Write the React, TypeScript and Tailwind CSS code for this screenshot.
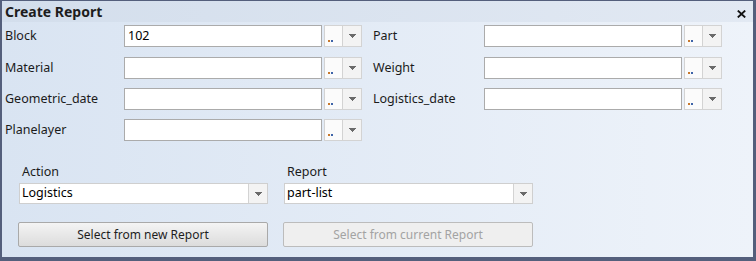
import React from "react";

const font = { fontFamily: '"Noto Sans", "Open Sans", Arial, sans-serif' };

function Arrow() {
  return (
    <svg width="7" height="4" viewBox="0 0 7 4" className="block">
      <rect x="0" y="0" width="7" height="1" fill="#6a6a6a" />
      <rect x="1" y="1" width="5" height="1" fill="#6a6a6a" />
      <rect x="2" y="2" width="3" height="1" fill="#6a6a6a" />
      <rect x="3" y="3" width="1" height="1" fill="#6a6a6a" />
    </svg>
  );
}

function Field({ label, value, labelW }: { label: string; value?: string; labelW: string }) {
  return (
    <div className="flex items-center h-[22px]">
      <div className={`${labelW} text-[12.5px] text-[#1b1b1b] leading-none shrink-0`}>{label}</div>
      <div className="w-[198px] h-[22px] bg-white border border-[#ababab] flex items-center px-[3px] text-[12.5px] text-black">
        {value}
      </div>
      <div className="ml-[2px] w-[19px] h-[22px] bg-[#fbfbfb] border border-[#d3d3d3] relative">
        <span className="absolute left-[3px] top-[14px] w-[2px] h-[2px] bg-[#c8782c]" />
        <span className="absolute left-[6px] top-[14px] w-[2px] h-[2px] bg-[#3e64a8]" />
      </div>
      <div className="w-[19px] h-[22px] bg-[#f3f3f3] border border-l-0 border-[#d3d3d3] flex items-center justify-center">
        <Arrow />
      </div>
    </div>
  );
}

function Combo({ value }: { value: string }) {
  return (
    <div className="w-[249px] h-[21px] bg-white border border-[#cfcfcf] flex">
      <div className="flex-1 flex items-center px-[2px] text-[12.5px] text-black">{value}</div>
      <div className="w-[19px] h-full bg-[#f3f3f3] border-l border-[#d3d3d3] flex items-center justify-center">
        <Arrow />
      </div>
    </div>
  );
}

export default function App() {
  return (
    <div className="w-[756px] h-[261px] bg-[#545f7c] pt-[1px] pl-[2px]" style={font}>
      <div className="w-[751px] h-[256px] bg-gradient-to-r from-[#d9e4f2] to-[#eef3fa] flex flex-col">
        <div className="h-[21px] flex items-center justify-between pl-[3px] pr-[7px] bg-gradient-to-r from-[#d3deec] to-[#e2e9f3]">
          <div className="text-[14px] font-bold text-[#1d1d1d] leading-none">Create Report</div>
          <svg width="9" height="8" viewBox="0 0 9 8" className="mt-[4px]">
            <path d="M0.8 0.6 L8.2 7.4 M8.2 0.6 L0.8 7.4" stroke="#111" strokeWidth="1.9" />
          </svg>
        </div>
        <div className="flex flex-col pl-[3px] mt-[3px]">
          <div className="flex gap-[11px]">
            <Field label="Block" value="102" labelW="w-[119px]" />
            <Field label="Part" labelW="w-[111px]" />
          </div>
          <div className="flex gap-[11px] mt-[10px]">
            <Field label="Material" labelW="w-[119px]" />
            <Field label="Weight" labelW="w-[111px]" />
          </div>
          <div className="flex gap-[11px] mt-[9px]">
            <Field label="Geometric_date" labelW="w-[119px]" />
            <Field label="Logistics_date" labelW="w-[111px]" />
          </div>
          <div className="flex gap-[11px] mt-[9px]">
            <Field label="Planelayer" labelW="w-[119px]" />
          </div>
        </div>
        <div className="flex pl-[17px] mt-[25px] gap-[16px]">
          <div className="flex flex-col">
            <div className="text-[12.5px] text-[#1b1b1b] pl-[3px] leading-none h-[17px]">Action</div>
            <Combo value="Logistics" />
          </div>
          <div className="flex flex-col">
            <div className="text-[12.5px] text-[#1b1b1b] pl-[3px] leading-none h-[17px]">Report</div>
            <Combo value="part-list" />
          </div>
        </div>
        <div className="flex pl-[16px] mt-[18px] gap-[15px]">
          <button className="w-[250px] h-[25px] border border-[#a9a9a9] rounded-[2px] bg-gradient-to-b from-[#f4f4f4] to-[#dcdcdc] text-[12px] text-[#1e1e1e]">
            Select from new Report
          </button>
          <button className="w-[250px] h-[25px] border border-[#bcbcbc] rounded-[2px] bg-[#efefef] text-[12px] text-[#a3a3a3]">
            Select from current Report
          </button>
        </div>
      </div>
    </div>
  );
}
